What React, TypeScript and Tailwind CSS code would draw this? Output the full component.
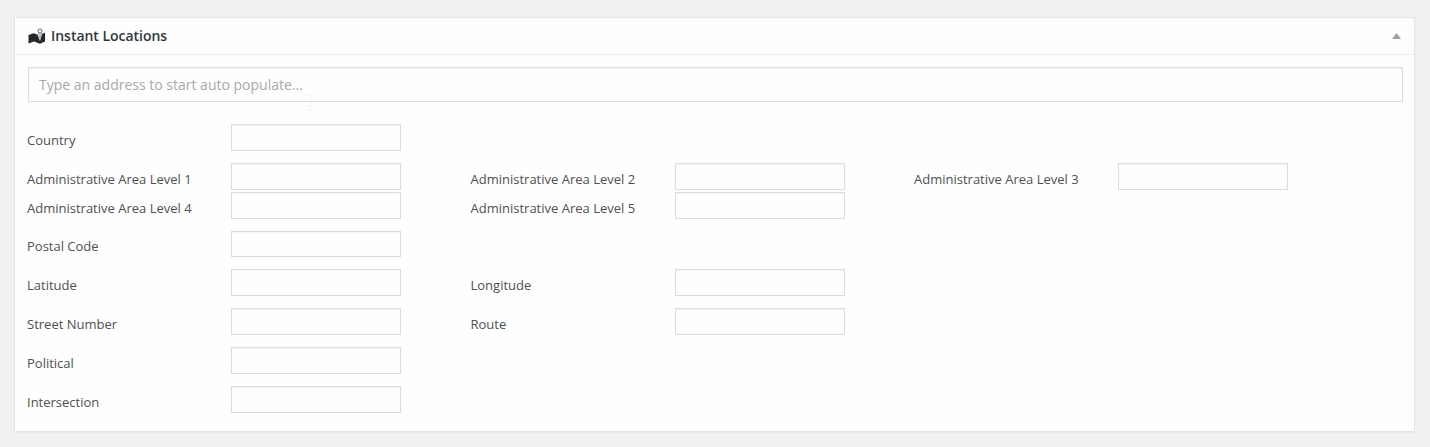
type Field = { label: string; name: string };
type Row = { gap: string; fields: Field[]; compact?: boolean };

const rows: Row[] = [
  { gap: "mt-[22px]", fields: [{ label: "Country", name: "country" }] },
  {
    gap: "mt-3",
    fields: [
      { label: "Administrative Area Level 1", name: "area1" },
      { label: "Administrative Area Level 2", name: "area2" },
      { label: "Administrative Area Level 3", name: "area3" },
    ],
  },
  {
    gap: "mt-0.5",
    fields: [
      { label: "Administrative Area Level 4", name: "area4" },
      { label: "Administrative Area Level 5", name: "area5" },
    ],
  },
  { gap: "mt-3", compact: true, fields: [{ label: "Postal Code", name: "postal" }] },
  {
    gap: "mt-3",
    fields: [
      { label: "Latitude", name: "lat" },
      { label: "Longitude", name: "lng" },
    ],
  },
  {
    gap: "mt-3",
    fields: [
      { label: "Street Number", name: "street" },
      { label: "Route", name: "route" },
    ],
  },
  { gap: "mt-3", fields: [{ label: "Political", name: "political" }] },
  { gap: "mt-3", fields: [{ label: "Intersection", name: "intersection" }] },
];

function MapIcon() {
  return (
    <svg width="18" height="17" viewBox="0 0 18 17" aria-hidden="true">
      <path d="M.5 7 L5.5 5.2 L9.5 6.4 L12 13 L14 6 L17 4.6 V13.6 L12 15.8 L6 13.4 L.5 15.6 Z" fill="#23282d" />
      <path d="M10 5 L12 12.5 L14 5 Z" fill="#a4a8ac" />
      <path d="M11.4 5 L12 11 L12.6 5 Z" fill="#f4f4f4" />
      <circle cx="12" cy="3" r="1.9" fill="#fff" stroke="#85898d" strokeWidth="1.2" />
    </svg>
  );
}

export default function App() {
  return (
    <div className="h-[447px] overflow-hidden bg-[#f1f1f1] pt-[17px] pr-[15px] pl-[14px] font-['Open_Sans',sans-serif]">
      <section className="h-[415px] border border-[#e5e5e5] bg-[#fefefe] shadow-[0_1px_1px_rgba(0,0,0,0.04)]">
        <header className="flex h-[37px] items-center border-b border-[#ebeeeb] pr-[13px] pl-[13px]">
          <MapIcon />
          <h2 className="ml-[5px] text-[14px] leading-5 font-semibold tracking-[-0.03px] text-[#32373c]">
            Instant Locations
          </h2>
          <svg className="ml-auto" width="9" height="6" viewBox="0 0 9 6" aria-hidden="true">
            <path d="M4.5 0 L9 6 H0 Z" fill="#a0a0a0" />
          </svg>
        </header>
        <div className="relative pt-3 pr-[11px] pl-3">
          <input
            className="ml-px block h-[35px] w-[1375px] border border-[#dcdcdc] bg-[#fefefe] px-2.5 text-[14px] text-[#444] shadow-[inset_0_1px_1px_rgba(0,0,0,0.04)] outline-none placeholder:text-[#a9a9a9]"
            placeholder="Type an address to start auto populate..."
          />
          <svg className="pointer-events-none absolute top-10 left-[292px]" width="7" height="16" viewBox="0 0 7 16" aria-hidden="true">
            <path d="M0 .5H3M4 .5H7M3.5 1V15M0 15.5H3M4 15.5H7" stroke="#eeeeee" strokeDasharray="2 1" fill="none" />
          </svg>
          {rows.map((row) => (
            <div
              key={row.fields[0].name}
              className={`${row.gap} ${row.compact ? "h-[26px]" : "h-[27px]"} grid grid-cols-[443.5px_443.5px_374px]`}
            >
              {row.fields.map((field) => (
                <label key={field.name} className="flex text-[13px] leading-[18px] text-[#505050]">
                  <span className={`w-[204px] ${row.compact ? "pt-1.5" : "pt-[7px]"}`}>{field.label}</span>
                  <input
                    name={field.name}
                    className={`${row.compact ? "h-[26px]" : "h-[27px]"} w-[170px] border border-[#dcdcdc] bg-[#fefefe] px-1.5 shadow-[inset_0_1px_1px_rgba(0,0,0,0.04)] outline-none`}
                  />
                </label>
              ))}
            </div>
          ))}
        </div>
      </section>
    </div>
  );
}
